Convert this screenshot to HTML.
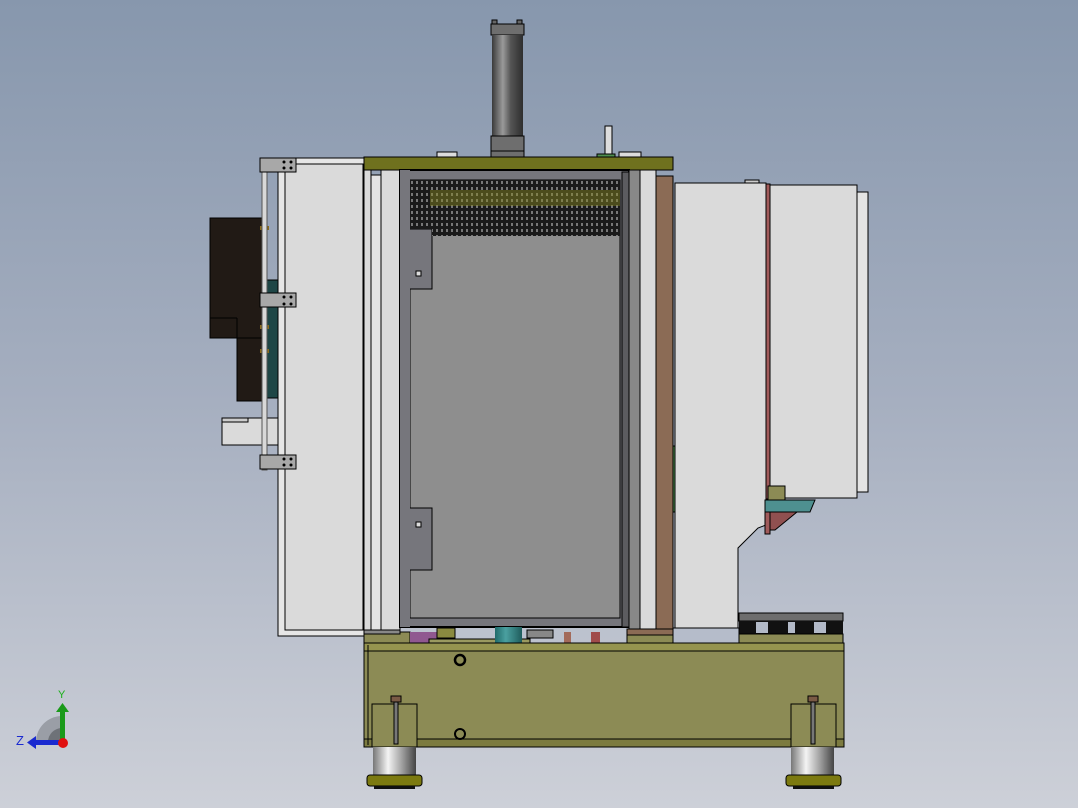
<!DOCTYPE html>
<html><head><meta charset="utf-8"><style>
html,body{margin:0;padding:0;width:1078px;height:808px;overflow:hidden}
svg{display:block}
</style></head><body>
<svg width="1078" height="808" viewBox="0 0 1078 808" xmlns="http://www.w3.org/2000/svg" stroke-linejoin="miter">
<defs>
<linearGradient id="bg" x1="0" y1="0" x2="0" y2="1">
<stop offset="0" stop-color="#8797ad"/><stop offset="0.5" stop-color="#a6afc0"/><stop offset="1" stop-color="#cdd0d8"/>
</linearGradient>
<linearGradient id="cyl" x1="0" y1="0" x2="1" y2="0">
<stop offset="0" stop-color="#3a3a3a"/><stop offset="0.35" stop-color="#9a9a9a"/><stop offset="0.6" stop-color="#555"/><stop offset="1" stop-color="#2e2e2e"/>
</linearGradient>
<linearGradient id="foot" x1="0" y1="0" x2="1" y2="0">
<stop offset="0" stop-color="#777"/><stop offset="0.35" stop-color="#f4f4f4"/><stop offset="0.7" stop-color="#999"/><stop offset="1" stop-color="#444"/>
</linearGradient>
<linearGradient id="teal" x1="0" y1="0" x2="1" y2="0">
<stop offset="0" stop-color="#1f6a6a"/><stop offset="0.4" stop-color="#4aa0a0"/><stop offset="1" stop-color="#1f5c5c"/>
</linearGradient>
<pattern id="mesh" width="5" height="6" patternUnits="userSpaceOnUse">
<rect width="5" height="6" fill="#1a1a1a"/><rect x="1" y="1" width="2" height="3" fill="#777"/>
</pattern>
</defs>
<rect width="1078" height="808" fill="url(#bg)"/>

<!-- cylinder -->
<rect x="492" y="20" width="5" height="4" fill="#666" stroke="#000"/>
<rect x="517" y="20" width="5" height="4" fill="#666" stroke="#000"/>
<rect x="491" y="24" width="33" height="11" fill="#6e6e6e" stroke="#000"/>
<rect x="492" y="35" width="31" height="101" fill="url(#cyl)"/>
<rect x="491" y="136" width="33" height="22" fill="#6e6e6e" stroke="#000"/>
<line x1="491" y1="151" x2="524" y2="151" stroke="#000"/>
<rect x="605" y="126" width="7" height="31" fill="#ddd" stroke="#000"/>
<rect x="597" y="154" width="18" height="4" fill="#4f8f4f" stroke="#000"/>
<rect x="619" y="152" width="22" height="6" fill="#ddd" stroke="#000"/>
<rect x="437" y="152" width="20" height="6" fill="#ddd" stroke="#000"/>

<!-- left dark box & accessories -->
<rect x="210" y="218" width="53" height="120" fill="#211a15" stroke="#000"/>
<rect x="237" y="338" width="26" height="63" fill="#211a15" stroke="#000"/>
<line x1="210" y1="318" x2="237" y2="318" stroke="#000"/><line x1="237" y1="318" x2="237" y2="338" stroke="#000"/>
<rect x="263" y="280" width="15" height="118" fill="#1e4646" stroke="#000"/>
<rect x="222" y="418" width="56" height="27" fill="#dadada" stroke="#000"/>
<rect x="222" y="418" width="26" height="4" fill="#ccc" stroke="#000"/>
<rect x="260" y="226" width="9" height="4" fill="#8a6a1a"/>
<rect x="260" y="325" width="9" height="4" fill="#8a6a1a"/>
<rect x="260" y="349" width="9" height="4" fill="#8a6a1a"/>

<!-- left door -->
<rect x="278" y="158" width="86" height="478" fill="#e6e6e6" stroke="#000"/>
<rect x="285" y="164" width="78" height="466" fill="#dadada" stroke="#000"/>
<rect x="262" y="160" width="5" height="310" fill="#d8d8d8" stroke="#555"/>
<rect x="260" y="158" width="36" height="14" fill="#a8a8a8" stroke="#000"/>
<rect x="260" y="293" width="36" height="14" fill="#a8a8a8" stroke="#000"/>
<rect x="260" y="455" width="36" height="14" fill="#a8a8a8" stroke="#000"/>
<g fill="#000"><circle cx="284" cy="162" r="1.5"/><circle cx="291" cy="162" r="1.5"/><circle cx="284" cy="168" r="1.5"/><circle cx="291" cy="168" r="1.5"/>
<circle cx="284" cy="297" r="1.5"/><circle cx="291" cy="297" r="1.5"/><circle cx="284" cy="304" r="1.5"/><circle cx="291" cy="304" r="1.5"/>
<circle cx="284" cy="459" r="1.5"/><circle cx="291" cy="459" r="1.5"/><circle cx="284" cy="465" r="1.5"/><circle cx="291" cy="465" r="1.5"/></g>

<!-- central strips -->
<rect x="364" y="170" width="7" height="462" fill="#dadada" stroke="#000"/>
<rect x="371" y="175" width="10" height="457" fill="#e4e4e4" stroke="#000"/>
<rect x="381" y="170" width="19" height="462" fill="#dadada" stroke="#000"/>
<!-- top plate -->
<rect x="364" y="157" width="309" height="13" fill="#6f711e" stroke="#000"/>

<!-- cabinet -->
<rect x="400" y="170" width="229" height="457" fill="#76767c" stroke="#000" stroke-width="2"/>
<rect x="410" y="180" width="210" height="438" fill="#8e8e8e" stroke="#000"/>
<path d="M400 170 H410 V229 H432 V289 H410 V508 H432 V570 H410 V627 H400 Z" fill="#76767c"/>
<path d="M410 229 H432 V289 H410 M410 508 H432 V570 H410" fill="none" stroke="#000"/>
<rect x="416" y="271" width="5" height="5" fill="#ddd" stroke="#000"/>
<rect x="416" y="522" width="5" height="5" fill="#ddd" stroke="#000"/>
<rect x="410" y="180" width="210" height="49" fill="url(#mesh)"/>
<rect x="432" y="229" width="188" height="7" fill="url(#mesh)"/>
<rect x="430" y="190" width="190" height="16" fill="#8a8a20" opacity="0.45"/>
<rect x="622" y="172" width="7" height="455" fill="#5c5c60" stroke="#000"/>

<!-- right strips -->
<rect x="629" y="170" width="11" height="462" fill="#888" stroke="#000"/>
<rect x="640" y="170" width="16" height="462" fill="#dadada" stroke="#000"/>
<rect x="656" y="176" width="17" height="456" fill="#8b6b55" stroke="#000"/>
<rect x="673" y="446" width="5" height="66" fill="#4f8f4f" stroke="#000"/>

<!-- right panel -->
<path d="M675 183 H766 V525 L758 528 L738 548 V628 H675 Z" fill="#dadada" stroke="#000"/>
<rect x="745" y="180" width="14" height="3" fill="#ccc" stroke="#000"/>
<rect x="766" y="184" width="4" height="315" fill="#a05a5a" stroke="#000"/>
<rect x="770" y="185" width="87" height="313" fill="#dadada" stroke="#000"/>
<rect x="857" y="192" width="11" height="300" fill="#e4e4e4" stroke="#000"/>
<rect x="768" y="486" width="17" height="16" fill="#8c8b55" stroke="#000"/>
<path d="M765 500 H815 L810 512 H765 Z" fill="#4e9090" stroke="#000"/>
<path d="M770 512 H797 L775 530 H770 Z" fill="#905050" stroke="#000"/>
<rect x="765" y="512" width="5" height="22" fill="#a05a5a" stroke="#000"/>

<!-- slotted block -->
<rect x="739" y="613" width="104" height="8" fill="#6e6e6e" stroke="#000"/>
<rect x="739" y="621" width="104" height="13" fill="#111"/>
<rect x="756" y="622" width="12" height="11" fill="#b3bac8"/><rect x="788" y="622" width="7" height="11" fill="#b3bac8"/><rect x="814" y="622" width="12" height="11" fill="#b3bac8"/>
<rect x="739" y="634" width="104" height="10" fill="#8c8b55" stroke="#000"/>

<!-- bottom strip details -->
<rect x="364" y="632" width="46" height="12" fill="#8c8b55" stroke="#000"/>
<rect x="364" y="630" width="36" height="4" fill="#888" stroke="#000"/>
<rect x="410" y="632" width="40" height="12" fill="#905890"/>
<rect x="437" y="628" width="18" height="10" fill="#8a8a40" stroke="#000"/>
<rect x="429" y="639" width="101" height="5" fill="#9a9a60" stroke="#000"/>
<rect x="495" y="627" width="27" height="17" fill="url(#teal)"/>
<rect x="527" y="630" width="26" height="8" fill="#888" stroke="#000"/>
<rect x="564" y="632" width="7" height="12" fill="#a36a5a"/>
<rect x="591" y="632" width="9" height="12" fill="#a04b4b"/>
<rect x="627" y="632" width="46" height="12" fill="#8c8b55" stroke="#000"/>
<rect x="627" y="629" width="46" height="6" fill="#8b6b55" stroke="#000"/>
<rect x="673" y="628" width="66" height="16" fill="#b5bcca" stroke="#000"/>

<!-- base -->
<rect x="364" y="643" width="480" height="104" fill="#8c8b55" stroke="#000"/>
<rect x="364" y="643" width="480" height="8" fill="#95944f" stroke="#000"/>
<rect x="364" y="739" width="480" height="8" fill="#7c7b40" stroke="#000"/>
<line x1="368" y1="645" x2="368" y2="745" stroke="#000"/>
<circle cx="460" cy="660" r="5" fill="none" stroke="#000" stroke-width="2.5"/>
<circle cx="460" cy="734" r="5" fill="none" stroke="#000" stroke-width="2"/>

<!-- feet -->
<g>
<rect x="372" y="704" width="45" height="43" fill="#8c8b55" stroke="#000"/>
<rect x="391" y="696" width="10" height="6" fill="#7a5a45" stroke="#000"/>
<rect x="394" y="702" width="4" height="42" fill="#777" stroke="#000"/>
<rect x="373" y="747" width="43" height="28" fill="url(#foot)"/>
<rect x="367" y="775" width="55" height="11" rx="3" fill="#7c7a10" stroke="#000"/>
<rect x="374" y="786" width="41" height="3" fill="#111"/>
</g>
<g>
<rect x="791" y="704" width="45" height="43" fill="#8c8b55" stroke="#000"/>
<rect x="808" y="696" width="10" height="6" fill="#7a5a45" stroke="#000"/>
<rect x="811" y="702" width="4" height="42" fill="#777" stroke="#000"/>
<rect x="791" y="747" width="43" height="28" fill="url(#foot)"/>
<rect x="786" y="775" width="55" height="11" rx="3" fill="#7c7a10" stroke="#000"/>
<rect x="793" y="786" width="41" height="3" fill="#111"/>
</g>

<!-- axis triad -->
<path d="M62 742 L36 742 A26 26 0 0 1 62 716 Z" fill="#9a9ea6"/>
<path d="M62 742 L48 742 A14 14 0 0 1 62 728 Z" fill="#6e7278"/>
<rect x="60" y="711" width="5" height="30" fill="#1a9a1a"/>
<path d="M56 712 L62.5 703 L69 712 Z" fill="#1a9a1a"/>
<rect x="35" y="740" width="26" height="5" fill="#1a2ad0"/>
<path d="M36 736 L27 742.5 L36 749 Z" fill="#1a2ad0"/>
<circle cx="63" cy="743" r="5" fill="#e01010"/>
<text x="58" y="698" font-family="Liberation Sans, sans-serif" font-size="11" fill="#1ab01a">Y</text>
<text x="16" y="745" font-family="Liberation Sans, sans-serif" font-size="13" fill="#1a2ad0">Z</text>
</svg>
</body></html>
